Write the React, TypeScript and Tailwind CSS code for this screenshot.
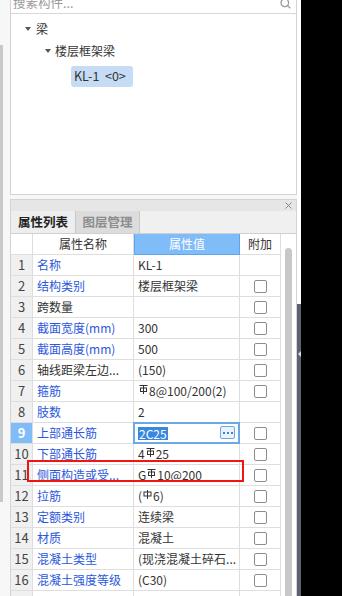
import React from 'react';

const FONT = "font-['Noto_Sans_CJK_SC','Microsoft_YaHei',sans-serif]";

// HRB400 rebar mark (the "C" grade glyph the app draws with its own font)
function Rebar3() {
    return (
        <svg width="9" height="9" viewBox="0 0 9 9" className="inline-block mx-[1px] -mt-[4px]" fill="none" stroke="#333" strokeWidth="1">
            <path d="M0.5 0.5H8.5" />
            <rect x="1.5" y="3" width="6" height="3.5" />
            <path d="M4.5 0.5V9" />
        </svg>
    );
}

// HPB300 rebar mark
function Rebar1() {
    return (
        <svg width="9" height="9" viewBox="0 0 9 9" className="inline-block mx-[1px] -mt-[4px]" fill="none" stroke="#333" strokeWidth="1">
            <rect x="1" y="2" width="7" height="4" />
            <path d="M4.5 0V9" />
        </svg>
    );
}

type Row = { name: string; blue: boolean; value: React.ReactNode; check: boolean };

const rows: Row[] = [
    { name: '名称', blue: true, value: 'KL-1', check: false },
    { name: '结构类别', blue: true, value: '楼层框架梁', check: true },
    { name: '跨数量', blue: false, value: '', check: true },
    { name: '截面宽度(mm)', blue: true, value: '300', check: true },
    { name: '截面高度(mm)', blue: true, value: '500', check: true },
    { name: '轴线距梁左边...', blue: false, value: '(150)', check: true },
    { name: '箍筋', blue: true, value: <><Rebar3 />8@100/200(2)</>, check: true },
    { name: '肢数', blue: true, value: '2', check: false },
    { name: '上部通长筋', blue: true, value: '2C25', check: true },
    { name: '下部通长筋', blue: true, value: <>4<Rebar3 />25</>, check: true },
    { name: '侧面构造或受...', blue: true, value: <>G<Rebar3 />10@200</>, check: true },
    { name: '拉筋', blue: true, value: <>(<Rebar1 />6)</>, check: true },
    { name: '定额类别', blue: true, value: '连续梁', check: true },
    { name: '材质', blue: true, value: '混凝土', check: true },
    { name: '混凝土类型', blue: true, value: '(现浇混凝土碎石...', check: true },
    { name: '混凝土强度等级', blue: true, value: '(C30)', check: true },
];

function Check() {
    return <div className="w-[13px] h-[13px] border border-[#8c8c8c] rounded-[2px] bg-white" />;
}

export default function App() {
    return (
        <div className={`w-[342px] h-[596px] flex bg-black overflow-hidden text-[12px] text-[#333] ${FONT}`}>
            <div className="w-[301px] h-full flex bg-[#f7f7f7]">
                {/* left gutter with a neighbour pane's scrollbar */}
                <div className="w-[10px] shrink-0 pt-[45px]">
                    <div className="w-[3px] h-[457px] bg-[#c9c9c9]" />
                </div>

                {/* main column */}
                <div className="w-[287px] shrink-0 flex flex-col">
                    {/* search + tree */}
                    <div className="bg-white border-x border-b border-[#d4d4d4]">
                        <div className="h-[14px] overflow-hidden border-b border-[#d8d8d8]">
                            <div className="h-[20px] -mt-[7px] flex items-center justify-between pl-[2px] pr-[5px]">
                                <span className="text-[#9a9a9a] text-[12.5px]">搜素构件...</span>
                                <svg width="11" height="11" viewBox="0 0 11 11" fill="none" stroke="#9a9a9a" strokeWidth="1.3">
                                    <circle cx="4.8" cy="4.8" r="3.8" />
                                    <path d="M7.6 7.6L10.3 10.3" />
                                </svg>
                            </div>
                        </div>
                        <div className="h-[180px] pt-[4px]">
                            <div className="h-[22px] flex items-center pl-[14px]">
                                <span className="w-0 h-0 border-x-[3px] border-x-transparent border-t-[4px] border-t-[#555] mr-[5px]" />
                                <span>梁</span>
                            </div>
                            <div className="h-[22px] flex items-center pl-[34px]">
                                <span className="w-0 h-0 border-x-[3px] border-x-transparent border-t-[4px] border-t-[#555] mr-[4px]" />
                                <span>楼层框架梁</span>
                            </div>
                            <div className="mt-[4px] pl-[60px] flex">
                                <div className="h-[21px] w-[62px] pl-[3px] flex items-center rounded-[3px] bg-[#c5dcf4] whitespace-pre text-[12.5px]">KL-1  &lt;0&gt;</div>
                            </div>
                        </div>
                    </div>

                    <div className="h-[4px] shrink-0" />

                    {/* property panel */}
                    <div className="flex-1 flex flex-col border-x border-t border-[#d4d4d4] bg-white">
                        <div className="h-[11px] bg-[#e6e6e6] flex items-center justify-end pr-[4px]">
                            <svg width="7" height="7" viewBox="0 0 7 7" stroke="#8a8a8a" strokeWidth="1">
                                <path d="M0.5 0.5L6.5 6.5M6.5 0.5L0.5 6.5" />
                            </svg>
                        </div>
                        <div className="h-[23px] flex bg-[#f0f0f0] border-b border-[#d0d0d0]">
                            <div className="w-[64px] flex items-center justify-center font-bold text-[12.5px] text-[#222] bg-[#eeeeee]">属性列表</div>
                            <div className="w-[65px] flex items-center justify-center font-bold text-[12.5px] text-[#8c8c8c] bg-[#dcdcdc] border-x border-[#c8c8c8]">图层管理</div>
                        </div>

                        <div className="flex-1 flex overflow-hidden">
                            <div className="w-[270px] flex flex-col">
                                {/* header */}
                                <div className="h-[21px] flex shrink-0">
                                    <div className="w-[22px] border-r border-b border-[#dedede]" />
                                    <div className="w-[101px] border-r border-b border-[#dedede] flex items-center justify-center">属性名称</div>
                                    <div className="w-[106px] border border-[#5ea4ee] bg-[#80bcf7] text-white flex items-center justify-center -mt-px">属性值</div>
                                    <div className="w-[41px] border-r border-b border-[#dedede] flex items-center justify-center">附加</div>
                                </div>

                                <div className="relative flex flex-col">
                                    {rows.map((r, i) => {
                                        const active = i === 8;
                                        return (
                                            <div key={i} className="h-[21px] flex shrink-0">
                                                <div className={`w-[22px] border-r border-b border-[#dedede] flex items-center justify-center text-[13px] ${active ? 'bg-[#80bcf7] text-white font-bold' : 'bg-[#f0f0f0] text-[#444]'}`}>{i + 1}</div>
                                                <div className={`w-[101px] border-r border-b border-[#dedede] flex items-center pl-[4px] whitespace-nowrap overflow-hidden ${r.blue ? 'text-[#2b57dc]' : 'text-[#333]'}`}>{r.name}</div>
                                                <div className="relative w-[106px] border-r border-b border-[#dedede] flex items-center pl-[4px] whitespace-nowrap overflow-visible">
                                                    {active ? (
                                                        <>
                                                            <div className="absolute -left-px -top-px -right-px -bottom-px border-2 border-[#6aa8ea]" />
                                                            <span className="bg-[#3a87de] text-white px-px leading-[13px]">2C25</span>
                                                            <div className="absolute right-[4px] top-[3px] w-[15px] h-[13px] rounded-[2px] border border-[#6ea6e6] bg-[#eaf2fc] flex items-center justify-center gap-[2px]">
                                                                <span className="w-[2px] h-[2px] bg-[#3b82d6]" />
                                                                <span className="w-[2px] h-[2px] bg-[#3b82d6]" />
                                                                <span className="w-[2px] h-[2px] bg-[#3b82d6]" />
                                                            </div>
                                                        </>
                                                    ) : (
                                                        r.value
                                                    )}
                                                </div>
                                                <div className="w-[41px] border-r border-b border-[#dedede] flex items-center justify-center">
                                                    {r.check && <Check />}
                                                </div>
                                            </div>
                                        );
                                    })}
                                    <div className="h-[21px] flex shrink-0">
                                        <div className="w-[22px] border-r border-[#dedede] bg-[#f0f0f0]" />
                                        <div className="w-[101px] border-r border-[#dedede]" />
                                        <div className="w-[106px] border-r border-[#dedede]" />
                                        <div className="w-[41px] border-r border-[#dedede]" />
                                    </div>

                                    {/* red annotation box */}
                                    <div className="absolute left-[16px] top-[205px] w-[217px] h-[22px] border-2 border-[#f2140f]" />
                                </div>
                            </div>

                            {/* scrollbar */}
                            <div className="w-[15px] pt-[14px] pl-[4px]">
                                <div className="w-[7px] h-full rounded-t-full bg-[#c8c8c8]" />
                            </div>
                        </div>
                    </div>
                </div>

                {/* right gutter */}
                <div className="w-[4px] shrink-0 flex flex-col bg-white">
                    <div className="h-[304px]" />
                    <div className="flex-1 bg-[#5a6470] pt-[47px] flex justify-center">
                        <span className="w-0 h-0 border-y-[3px] border-y-transparent border-r-[3px] border-r-[#d8dce0]" />
                    </div>
                </div>
            </div>
        </div>
    );
}
